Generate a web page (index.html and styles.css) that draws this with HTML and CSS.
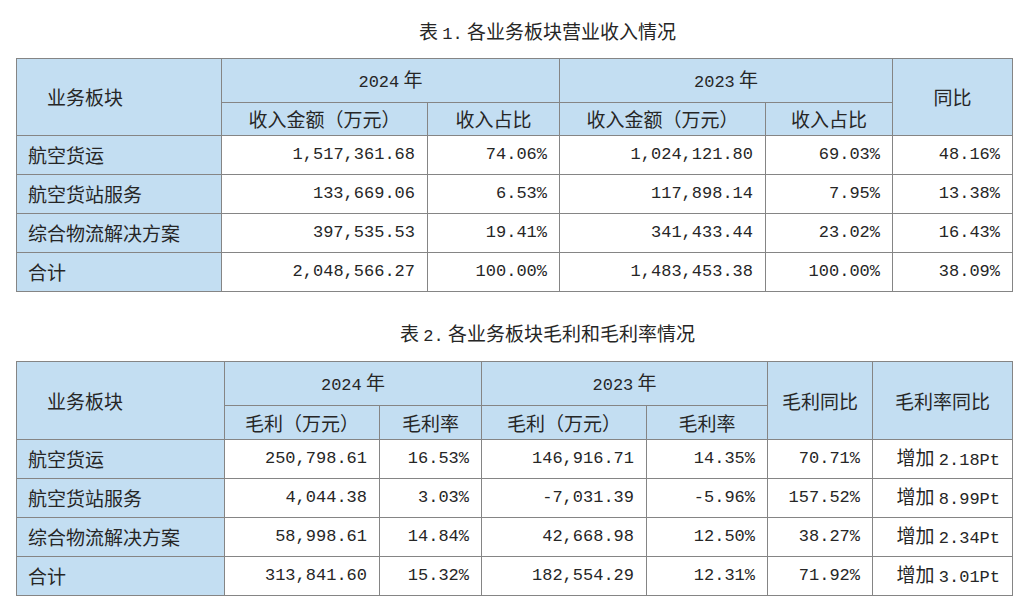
FILE: index.html
```html
<!DOCTYPE html>
<html lang="zh-CN">
<head>
<meta charset="utf-8">
<title>业务板块</title>
<link rel="stylesheet" href="styles.css">
</head>
<body>
<div class="page">
  <div class="title title-1">表 <span class="n">1.</span> 各业务板块营业收入情况</div>
  <table class="tbl">
    <colgroup>
      <col style="width:205px"><col style="width:206px"><col style="width:132px"><col style="width:206px"><col style="width:127px"><col style="width:120px">
    </colgroup>
    <tr class="h1">
      <th rowspan="2" class="lab">业务板块</th>
      <th colspan="2"><span class="n">2024</span> 年</th>
      <th colspan="2"><span class="n">2023</span> 年</th>
      <th rowspan="2">同比</th>
    </tr>
    <tr class="h2">
      <th>收入金额（万元）</th>
      <th>收入占比</th>
      <th>收入金额（万元）</th>
      <th>收入占比</th>
    </tr>
    <tr class="r">
      <td class="name">航空货运</td>
      <td class="num">1,517,361.68</td><td class="num">74.06%</td>
      <td class="num">1,024,121.80</td><td class="num">69.03%</td><td class="num">48.16%</td>
    </tr>
    <tr class="r">
      <td class="name">航空货站服务</td>
      <td class="num">133,669.06</td><td class="num">6.53%</td>
      <td class="num">117,898.14</td><td class="num">7.95%</td><td class="num">13.38%</td>
    </tr>
    <tr class="r">
      <td class="name">综合物流解决方案</td>
      <td class="num">397,535.53</td><td class="num">19.41%</td>
      <td class="num">341,433.44</td><td class="num">23.02%</td><td class="num">16.43%</td>
    </tr>
    <tr class="r">
      <td class="name">合计</td>
      <td class="num">2,048,566.27</td><td class="num">100.00%</td>
      <td class="num">1,483,453.38</td><td class="num">100.00%</td><td class="num">38.09%</td>
    </tr>
  </table>

  <div class="title title-2">表 <span class="n">2.</span> 各业务板块毛利和毛利率情况</div>
  <table class="tbl">
    <colgroup>
      <col style="width:208px"><col style="width:155px"><col style="width:102px"><col style="width:165px"><col style="width:121px"><col style="width:105px"><col style="width:140px">
    </colgroup>
    <tr class="h1">
      <th rowspan="2" class="lab">业务板块</th>
      <th colspan="2"><span class="n">2024</span> 年</th>
      <th colspan="2"><span class="n">2023</span> 年</th>
      <th rowspan="2">毛利同比</th>
      <th rowspan="2">毛利率同比</th>
    </tr>
    <tr class="h2 h2b">
      <th>毛利（万元）</th>
      <th>毛利率</th>
      <th>毛利（万元）</th>
      <th>毛利率</th>
    </tr>
    <tr class="r">
      <td class="name">航空货运</td>
      <td class="num">250,798.61</td><td class="num">16.53%</td>
      <td class="num">146,916.71</td><td class="num">14.35%</td><td class="num">70.71%</td>
      <td class="mix">增加 <span class="n">2.18Pt</span></td>
    </tr>
    <tr class="r">
      <td class="name">航空货站服务</td>
      <td class="num">4,044.38</td><td class="num">3.03%</td>
      <td class="num">-7,031.39</td><td class="num">-5.96%</td><td class="num">157.52%</td>
      <td class="mix">增加 <span class="n">8.99Pt</span></td>
    </tr>
    <tr class="r">
      <td class="name">综合物流解决方案</td>
      <td class="num">58,998.61</td><td class="num">14.84%</td>
      <td class="num">42,668.98</td><td class="num">12.50%</td><td class="num">38.27%</td>
      <td class="mix">增加 <span class="n">2.34Pt</span></td>
    </tr>
    <tr class="r">
      <td class="name">合计</td>
      <td class="num">313,841.60</td><td class="num">15.32%</td>
      <td class="num">182,554.29</td><td class="num">12.31%</td><td class="num">71.92%</td>
      <td class="mix">增加 <span class="n">3.01Pt</span></td>
    </tr>
  </table>
</div>
</body>
</html>
```

FILE: styles.css
```css
html, body {
  margin: 0;
  padding: 0;
  background: #ffffff;
}

body {
  font-family: "Noto Sans CJK SC", sans-serif;
  font-size: 19px;
  color: #262626;
}

.page {
  display: flex;
  flex-direction: column;
  padding: 0 11px 0 16px;
}

.n {
  font-family: "Liberation Mono", "Noto Sans CJK SC", monospace;
  font-size: 17px;
}

.title {
  text-align: center;
  line-height: 26px;
  height: 26px;
  padding-left: 66px;
  white-space: nowrap;
}

.title-1 {
  margin-top: 18px;
  margin-bottom: 14px;
}

.title-2 {
  margin-top: 28px;
  margin-bottom: 15px;
}

.tbl {
  width: 996px;
  table-layout: fixed;
  border-collapse: collapse;
  border: 1px solid #7a7a7a;
}

.tbl th,
.tbl td {
  border: 1px solid #858585;
  padding: 0;
  white-space: nowrap;
  line-height: 24px;
}

.tbl th {
  background: #c3def2;
  font-weight: normal;
  text-align: center;
  vertical-align: middle;
}

.tbl th.lab {
  text-align: left;
  padding-left: 30px;
}

.h1 {
  height: 44px;
}

.h2 {
  height: 33px;
}

.h2b {
  height: 34px;
}

.r {
  height: 39px;
}

.tbl td.name {
  background: #c3def2;
  text-align: left;
  padding-left: 11px;
}

.tbl td.num {
  font-family: "Liberation Mono", "Noto Sans CJK SC", monospace;
  font-size: 17px;
  text-align: right;
  padding-right: 12px;
}

.tbl td.mix {
  text-align: right;
  padding-right: 12px;
}
```
